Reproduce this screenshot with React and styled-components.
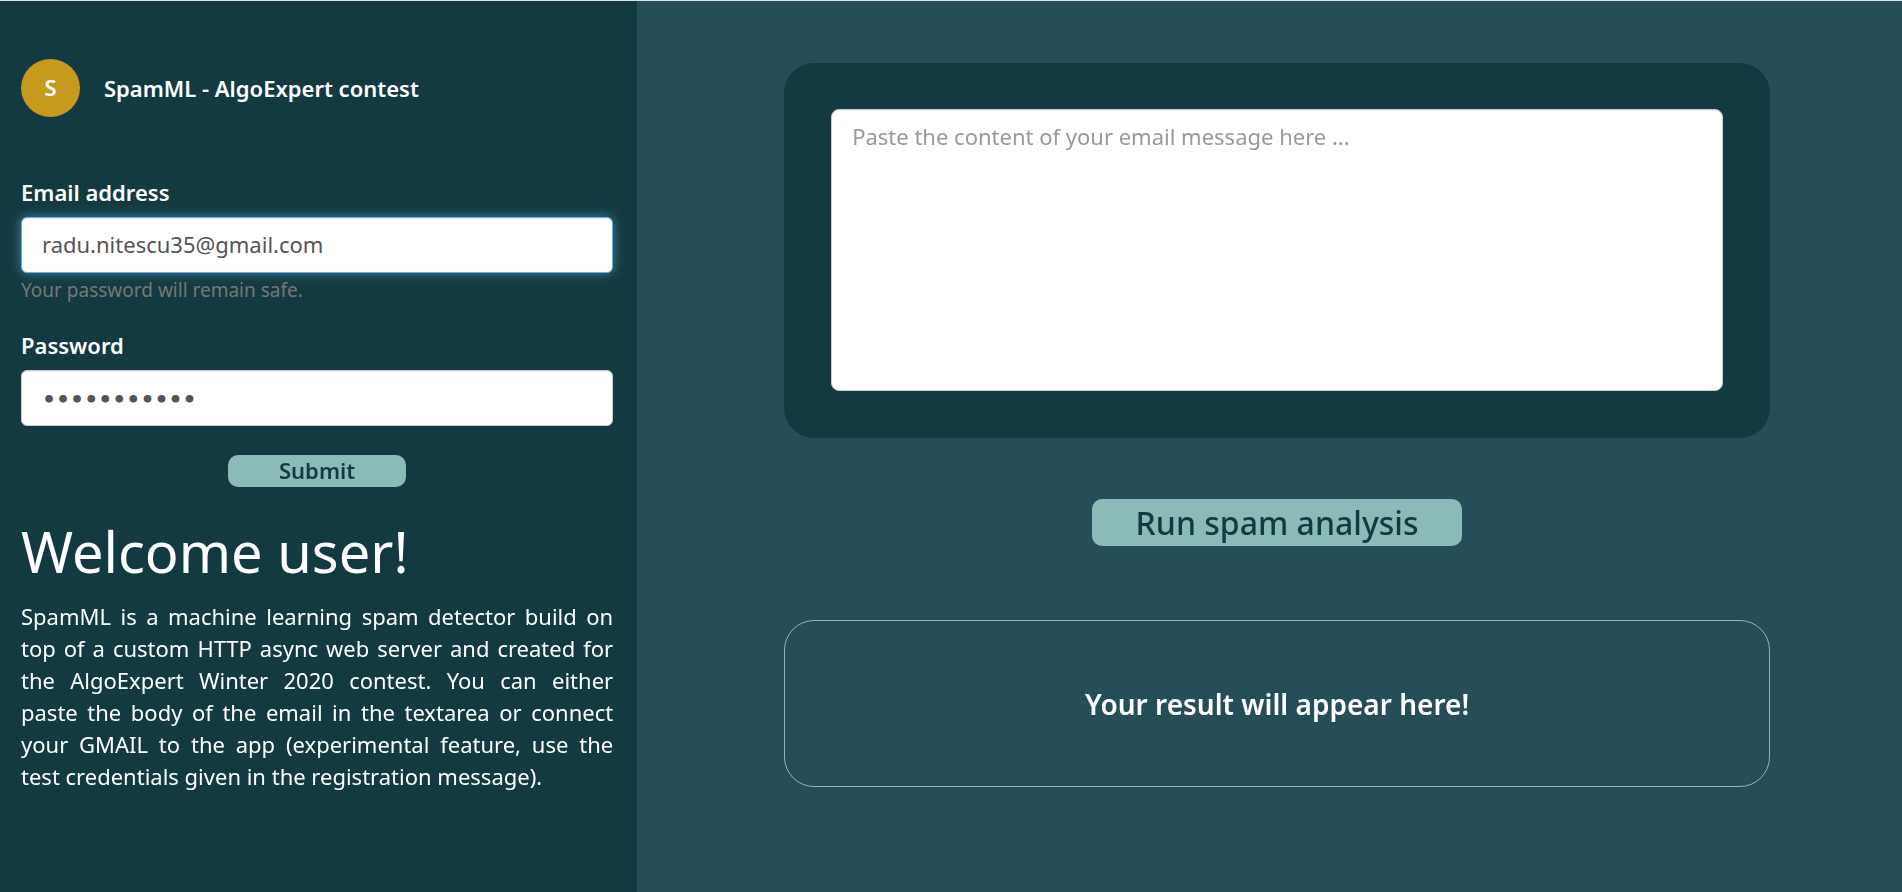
import React, { useEffect, useRef, useState } from "react";
import styled, { createGlobalStyle, css } from "styled-components";

const GlobalStyle = createGlobalStyle`
  *, *::before, *::after { box-sizing: border-box; }
  body {
    margin: 0;
    background: #264e58;
    color: #fff;
    font-family: "Noto Sans", "Open Sans", sans-serif;
    font-size: 22px;
    line-height: 32px;
  }
`;

const Page = styled.div`
  display: grid;
  grid-template-columns: 67fr 133fr;
  min-height: 100vh;
  border-top: 1px solid #dfe3e4;
`;

const Sidebar = styled.aside`
  background: #143a41;
  padding: 58px 24px 24px 21px;
`;

const Brand = styled.header`
  display: flex;
  align-items: center;
  gap: 24px;
  margin-bottom: 59px;
`;

const Avatar = styled.span`
  display: grid;
  place-items: center;
  width: 59px;
  height: 58px;
  padding-bottom: 2px;
  border-radius: 50%;
  background: #c6991f;
  font-weight: 600;
`;

const BrandName = styled.span`
  font-weight: 600;
`;

const Label = styled.label`
  display: block;
  margin-bottom: 9px;
  font-weight: 600;
`;

const fieldBox = css`
  display: block;
  width: 100%;
  border: 1px solid #ccc;
  border-radius: 6px;
  padding: 10px 20px;
  background: #fff;
  box-shadow: inset 0 1px 1px rgba(0, 0, 0, 0.075);
  color: #555;
  font: inherit;
  outline: 0;

  &::placeholder {
    color: #999;
    opacity: 1;
  }

  &:focus {
    border-color: #66afe9;
    box-shadow: inset 0 1px 1px rgba(0, 0, 0, 0.075),
      0 0 12px rgba(102, 175, 233, 0.6);
  }
`;

const Field = styled.input`
  ${fieldBox}
  height: 56px;
  padding: 8px 20px 10px;
`;

const PasswordField = styled(Field)`
  padding: 10px 20px 8px;
  font-family: "DejaVu Sans", sans-serif;
  font-weight: 700;
`;

const MessageField = styled.textarea`
  ${fieldBox}
  height: 282px;
  border-radius: 8px;
  resize: none;
`;

const Hint = styled.small`
  display: block;
  margin: 3px 0 25px;
  color: #777;
  font-size: 19px;
  line-height: 28px;
`;

const ActionButton = styled.button`
  display: block;
  margin: ${(p) => (p.$large ? "61px auto 74px" : "29px auto 0")};
  width: ${(p) => (p.$large ? "370px" : "178px")};
  height: ${(p) => (p.$large ? "47px" : "32px")};
  padding: ${(p) => (p.$large ? "0" : "0 0 2px")};
  border: 0;
  border-radius: 10px;
  background: #8abbb9;
  color: #143a41;
  font-family: inherit;
  font-size: ${(p) => (p.$large ? "32px" : "22px")};
  font-weight: ${(p) => (p.$large ? 500 : 600)};
  line-height: 1;
  cursor: pointer;
`;

const Welcome = styled.h1`
  margin: 30px 0 15px;
  font-size: 56px;
  font-weight: 400;
  line-height: 68px;
`;

const Intro = styled.p`
  margin: 0;
  text-align: justify;
`;

const Main = styled.main`
  padding: 62px 132px 62px 147px;
`;

const MessageCard = styled.section`
  padding: 46px 47px 47px;
  border-radius: 30px;
  background: #143a41;
`;

const Result = styled.output`
  display: grid;
  place-items: center;
  min-height: 167px;
  border: 1px solid #8abbb9;
  border-radius: 30px;
  font-size: 28px;
  font-weight: 600;
`;

export default function App() {
  const emailRef = useRef(null);
  const [email, setEmail] = useState("radu.nitescu35@gmail.com");
  const [password, setPassword] = useState("algoexpert1");
  const [message, setMessage] = useState("");

  useEffect(() => {
    const input = emailRef.current;
    input.focus();
    input.setSelectionRange(input.value.length, input.value.length);
  }, []);

  return (
    <>
      <GlobalStyle />
      <Page>
        <Sidebar>
          <Brand>
            <Avatar>S</Avatar>
            <BrandName>SpamML - AlgoExpert contest</BrandName>
          </Brand>
          <form onSubmit={(e) => e.preventDefault()}>
            <Label htmlFor="email">Email address</Label>
            <Field
              id="email"
              ref={emailRef}
              inputMode="email"
              aria-describedby="email-hint"
              value={email}
              onChange={(e) => setEmail(e.target.value)}
            />
            <Hint id="email-hint">Your password will remain safe.</Hint>
            <Label htmlFor="password">Password</Label>
            <PasswordField
              id="password"
              type="password"
              value={password}
              onChange={(e) => setPassword(e.target.value)}
            />
            <ActionButton type="submit">Submit</ActionButton>
          </form>
          <Welcome>Welcome user!</Welcome>
          <Intro>
            SpamML is a machine learning spam detector build on top of a custom
            HTTP async web server and created for the AlgoExpert Winter 2020
            contest. You can either paste&nbsp;the body of the email in the
            textarea or connect your GMAIL to the app (experimental feature, use
            the test credentials given in the registration message).
          </Intro>
        </Sidebar>
        <Main>
          <MessageCard>
            <MessageField
              aria-label="Email message"
              placeholder="Paste the content of your email message here ..."
              value={message}
              onChange={(e) => setMessage(e.target.value)}
            />
          </MessageCard>
          <ActionButton type="button" $large>
            Run spam analysis
          </ActionButton>
          <Result>Your result will appear here!</Result>
        </Main>
      </Page>
    </>
  );
}
